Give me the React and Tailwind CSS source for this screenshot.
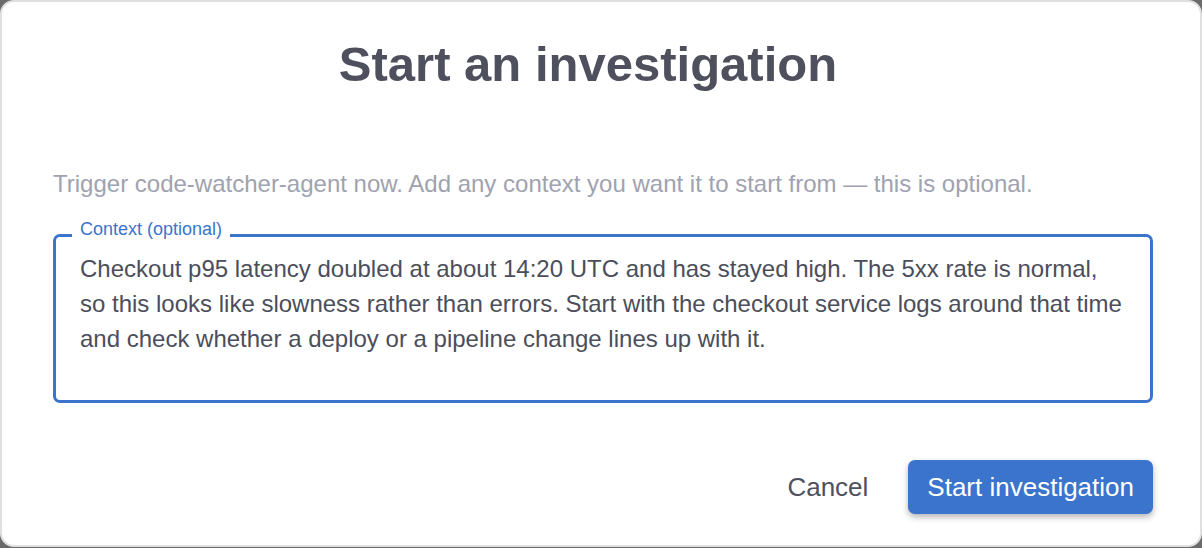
import React from 'react';

const lines = [
  'Checkout p95 latency doubled at about 14:20 UTC and has stayed high. The 5xx rate is normal,',
  'so this looks like slowness rather than errors. Start with the checkout service logs around that time',
  'and check whether a deploy or a pipeline change lines up with it.',
];

export default function App() {
  return (
    <div className="w-[1202px] h-[548px] bg-[#6b6b6b] font-['Liberation_Sans',Arial,sans-serif]">
      <div className="w-full h-[547px] bg-white rounded-[14px] border-2 border-[#e0e0e0] pl-[51px] pr-[47px] pt-[32px]">
        {/* Title */}
        <h2 className="text-center pr-[30px] text-[49px] leading-[60px] font-bold text-[#4e515d]">
          Start an investigation
        </h2>

        <p className="mt-[75px] text-[24px] leading-[30px] text-[#a0a2b0]">
          Trigger code-watcher-agent now. Add any context you want it to start from — this is optional.
        </p>

        {/* Context field */}
        <div className="relative mt-[35px] h-[169px] border-[3px] border-[#3a74cc] rounded-[7px] pl-[24px] pt-[14px]">
          <span className="absolute left-[16px] top-[-17px] px-2 bg-white text-[18px] leading-[18px] text-[#3a74cc]">
            Context (optional)
          </span>
          <div className="text-[24px] leading-[35px] text-[#4b4e5a]">
            {lines.map((line, i) => (
              <div key={i} className="whitespace-nowrap">{line}</div>
            ))}
          </div>
        </div>

        {/* Actions */}
        <div className="mt-[57px] flex justify-end items-center gap-[20px]">
          <button className="px-[20px] h-[54px] text-[26px] text-[#4e515d] bg-transparent">
            Cancel
          </button>
          <button className="h-[54px] px-[19px] rounded-[7px] bg-[#3a74cc] text-white text-[26px] shadow-[0_3px_6px_rgba(0,0,0,0.3)]">
            Start investigation
          </button>
        </div>
      </div>
    </div>
  );
}
